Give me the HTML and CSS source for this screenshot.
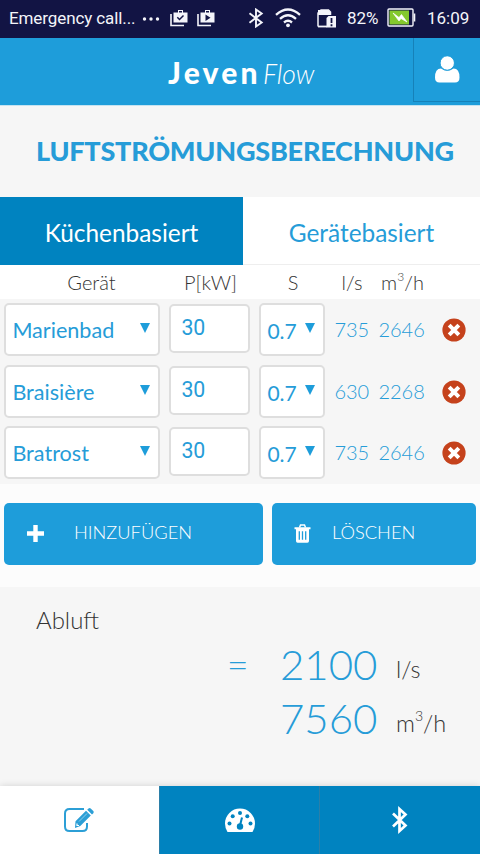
FILE: index.html
```
<!DOCTYPE html>
<html lang="de">
<head>
  <meta charset="UTF-8">
  <meta name="viewport" content="width=device-width, initial-scale=1.0">
  <title>Jeven Flow</title>
  <link rel="stylesheet" href="styles.css">
</head>
<body>
  <svg class="defs" width="0" height="0">
    <symbol id="remove" viewBox="0 0 24 24">
      <circle cx="12" cy="12" r="11.6" fill="#c5421c"/>
      <path d="M8.6 8.6l6.8 6.8M15.4 8.6l-6.8 6.8" stroke="#fff" stroke-width="4" stroke-linecap="square"/>
    </symbol>
  </svg>

  <div class="status">
    <span class="carrier">Emergency call...</span>
    <svg class="dots" width="18" height="6" viewBox="0 0 18 6" fill="#f4f4fa"><circle cx="2.5" cy="3" r="1.7"/><circle cx="9" cy="3" r="1.7"/><circle cx="15.5" cy="3" r="1.7"/></svg>
    <svg class="bag" width="18" height="18" viewBox="0 0 18 18"><path d="M1 5v11.5h13" fill="none" stroke="#f4f4fa" stroke-width="1.6"/><path d="M3.5 3.5H8V1h5v2.5h4.5v10h-14z" fill="#f4f4fa"/><path d="M9 2h3v1.500H9z" fill="#121444"/><path d="M7.300 8.300l2.200 2.200 4-4" fill="none" stroke="#121444" stroke-width="1.500"/></svg>
    <svg class="bag bag-play" width="18" height="18" viewBox="0 0 18 18"><path d="M1 5v11.5h13" fill="none" stroke="#f4f4fa" stroke-width="1.6"/><path d="M3.5 3.5H8V1h5v2.5h4.5v10h-14z" fill="#f4f4fa"/><path d="M9 2h3v1.500H9z" fill="#121444"/><path d="M8.500 5.500l5 3.200-5 3.200z" fill="#121444"/></svg>
    <svg class="bt" width="16" height="20" viewBox="0 0 16 20" fill="none" stroke="#f4f4fa" stroke-width="1.900"><path d="M1.500 5.300l12.200 9.200-5.700 4V1.500l5.700 4L1.500 14.700"/></svg>
    <svg class="wifi" width="26" height="20" viewBox="0 0 26 20" fill="none" stroke="#f4f4fa" stroke-width="2.300"><path d="M1 6.800q12-10.600 24 0M5 10.800q8-7 16 0M9 14.500q4-3.400 8 0"/><circle cx="13" cy="17.300" r="1.900" fill="#f4f4fa" stroke="none"/></svg>
    <svg class="sim" width="20" height="19" viewBox="0 0 20 19"><path d="M1 17.500V4l3-3h7.500l2 2v3" fill="none" stroke="#f4f4fa" stroke-width="1.500"/><path d="M1 1h10.500l2 2.500V6H1z" fill="#f4f4fa"/><path d="M1 17.500h9" stroke="#f4f4fa" stroke-width="1.800"/><path d="M9.500 9l2-2H19v11.500H9.500z" fill="#f4f4fa"/><path d="M14.500 9v5M14.500 15.300v2" stroke="#121444" stroke-width="1.800"/></svg>
    <span class="percent">82%</span>
    <svg class="battery" width="29" height="19" viewBox="0 0 29 19"><rect x="1" y="1" width="25" height="17" rx="1" fill="none" stroke="#f4f4fa" stroke-width="1.400"/><path d="M27.500 5.500v8" stroke="#f4f4fa" stroke-width="1.600"/><rect x="2.500" y="2.500" width="19.500" height="14" fill="#84c92d"/><path d="M6 5l6 4.500 2.500-3L20 14l-6-3.500-2 2.500z" fill="#fff" stroke="#fff" stroke-width=".7"/></svg>
    <span class="clock">16:09</span>
  </div>

  <header>
    <div class="logo"><b>Jeven</b><i>Flow</i></div>
    <div class="user">
      <svg width="25" height="27" viewBox="0 0 25 27" fill="#fff"><path d="M6 12.500Q0 12.500 0 21.500 0 26.500 4.500 26.500h15.500q4.500 0 4.500-5Q24.500 12.500 18.500 12.500q-6.250 4.500-12.500 0z"/><circle cx="12.250" cy="7" r="7.200" fill="#fff" stroke="#1e9dda" stroke-width="1"/></svg>
    </div>
  </header>

  <h1>LUFTSTRÖMUNGSBERECHNUNG</h1>

  <div class="tabs">
    <div class="tab active">Küchenbasiert</div>
    <div class="tab">Gerätebasiert</div>
  </div>

  <div class="grid head">
    <span>Gerät</span><span>P[kW]</span><span>S</span><span>l/s</span><span class="flow">m<sup>3</sup>/h</span>
  </div>

  <div class="rows">
    <div class="grid row">
      <div class="select">Marienbad<i class="arrow"></i></div>
      <div class="input">30</div>
      <div class="select small">0.7<i class="arrow"></i></div>
      <span>735</span><span class="flow">2646</span>
      <svg class="remove" width="24" height="24"><use href="#remove"/></svg>
    </div>
    <div class="grid row">
      <div class="select">Braisière<i class="arrow"></i></div>
      <div class="input">30</div>
      <div class="select small">0.7<i class="arrow"></i></div>
      <span>630</span><span class="flow">2268</span>
      <svg class="remove" width="24" height="24"><use href="#remove"/></svg>
    </div>
    <div class="grid row">
      <div class="select">Bratrost<i class="arrow"></i></div>
      <div class="input">30</div>
      <div class="select small">0.7<i class="arrow"></i></div>
      <span>735</span><span class="flow">2646</span>
      <svg class="remove" width="24" height="24"><use href="#remove"/></svg>
    </div>
  </div>

  <div class="buttons">
    <div class="btn add">
      <svg width="17" height="17" viewBox="0 0 17 17"><path d="M8.500 2v13M2 8.500h13" stroke="#fff" stroke-width="4.400" stroke-linecap="square"/></svg>
      <span>HINZUFÜGEN</span>
    </div>
    <div class="btn delete">
      <svg width="17" height="19" viewBox="0 0 17 19"><path d="M5.500 3.500l1-2.500h4l1 2.500" fill="none" stroke="#fff" stroke-width="1.500"/><path d="M.5 3.300h16v1.900H15V17q0 1.800-1.600 1.800H3.600Q2 18.800 2 17V5.200H.5z" fill="#fff"/><path d="M5.300 7.300v8.500M8.500 7.300v8.500M11.700 7.300v8.500" stroke="#1e9dda" stroke-width="1.300"/></svg>
      <span>LÖSCHEN</span>
    </div>
  </div>

  <div class="result">
    <div class="caption">Abluft</div>
    <div class="total"><span class="eq">=</span><span class="num">2100</span><span class="unit">l/s</span></div>
    <div class="total"><span></span><span class="num">7560</span><span class="unit">m<sup>3</sup>/h</span></div>
  </div>

  <nav>
    <div class="item active">
      <svg width="32" height="26" viewBox="0 0 32 26"><path d="M21 2H6.500Q2 2 2 6.500v13Q2 24 6.500 24h13q4.500 0 4.500-4.500V16" fill="none" stroke="#2c9fd6" stroke-width="2"/><path d="M12.500 14.300L23 3.800l4.800 4.800L17.300 19.100l-5.300 1.900zM24.200 2.700l1.300-1.300q1-1 2.200 0l2.600 2.600q1 1 0 2.200L29 7.500z" fill="#2c9fd6"/><path d="M16 14.500l8-8" stroke="#8fcdea" stroke-width="1"/><path d="M14 16.500v2h2" fill="none" stroke="#fff" stroke-width="1.200"/></svg>
    </div>
    <div class="item">
      <svg width="32" height="26" viewBox="0 0 32 26"><path d="M3.500 25Q1 21 1 16.500a15 15 0 0 1 30 0Q31 21 28.500 25z" fill="#fff"/><g fill="#0083c0"><circle cx="5.500" cy="16.500" r="2"/><circle cx="8.700" cy="9.300" r="2"/><circle cx="16" cy="6" r="2"/><circle cx="23.300" cy="9.300" r="2"/><circle cx="26.500" cy="16.500" r="2"/><circle cx="16" cy="19.500" r="3.200"/></g><path d="M16 18.500l2-8" stroke="#0083c0" stroke-width="2"/></svg>
    </div>
    <div class="item">
      <svg width="18" height="30" viewBox="0 0 18 30" fill="none" stroke="#fff" stroke-width="2.700"><path d="M2 8.500l12.500 12L8.500 26V4l6 5.500L2 21.500"/></svg>
    </div>
  </nav>
</body>
</html>
```
FILE: styles.css
```
* { box-sizing: border-box; }
body { margin: 0; width: 480px; height: 854px; overflow: hidden; background: #f6f6f6; color: #333; font-family: Lato, sans-serif; }
svg { display: block; flex: none; }
.defs { position: absolute; }
sup { font-size: 0.6em; line-height: 0; vertical-align: 0.75em; }

.status { display: flex; align-items: center; height: 38px; padding: 0 9px; background: #121444; color: #f4f4fa; font: 17px Roboto, sans-serif; white-space: nowrap; }
.carrier { width: 126px; padding-bottom: 2px; letter-spacing: -0.1px; }
.dots { margin-left: 7px; }
.bag { margin: 0 0 3px 10px; }
.bag-play { margin-left: 9px; }
.bt { margin: 0 0 3px 33px; }
.wifi { margin: 0 0 2px 11px; }
.sim { margin: 0 0 2px 16px; }
.percent { width: 40px; margin-left: 10px; padding-bottom: 2px; }
.battery { margin-bottom: 3px; }
.clock { margin-left: 11px; padding-bottom: 2px; }

header { display: flex; height: 68px; background: #1e9dda; border-bottom: 1px solid #c5e3f1; color: #fff; }
.logo { display: flex; align-items: baseline; width: 413px; padding: 17px 0 0 168px; }
.logo b { width: 95px; font-size: 30px; line-height: 34px; font-weight: 900; letter-spacing: 3.2px; }
.logo i { font-size: 26.500px; font-weight: 300; }
.user { width: 67px; height: 64px; padding: 18px 0 0 21px; border-left: 1px solid #1681b8; border-bottom: 1px solid #1681b8; }

h1 { height: 91px; margin: 0; padding: 28px 0 0 36px; font-size: 27px; line-height: 34px; font-weight: 900; color: #269cd8; letter-spacing: -0.22px; white-space: nowrap; }

.tabs { display: flex; height: 68px; border-bottom: 1px solid #eee; background: #fff; }
.tab { width: 237px; line-height: 71px; text-align: center; font-size: 24.4px; color: #269cd8; }
.tab.active { width: 243px; height: 68px; background: #0083c0; color: #fff; }

.grid { display: grid; grid-template-columns: 156px 81px 66px 34px 46px 24px; }
.head { height: 34px; padding-left: 5px; column-gap: 9px; background: #fff; font-size: 20px; font-weight: 300; line-height: 35px; white-space: nowrap; }
.head span { text-align: center; }
.head span:first-child { padding-left: 17px; }
.flow { margin: 0 -2px 0 1px; }
.rows { height: 185px; padding-top: 4px; background: #f6f6f6; }
.row { height: 61.500px; padding-left: 4.400px; column-gap: 9px; color: #269cd8; font-size: 20px; font-weight: 300; line-height: 52px; }
.select, .input { position: relative; height: 53px; border: 2px solid #dedede; border-radius: 5px; background: #fff; font-size: 21.600px; font-weight: 400; padding-left: 6px; line-height: 51px; }
.select.small { font-size: 21px; }
.input { height: 49px; margin-top: 1px; padding-left: 10px; font-family: Roboto, sans-serif; font-size: 21.300px; line-height: 43px; }
.arrow { position: absolute; right: 8px; top: 18px; border: 5px solid transparent; border-top: 10px solid #1e9dda; border-bottom: 0; }
.remove { margin: 15px 0 0 10px; }

.buttons { display: flex; gap: 9px; height: 103px; padding: 19px 4px; background: #fcfcfc; }
.btn { display: flex; height: 62px; border-radius: 5px; background: #1e9dda; color: #fff; font-size: 18.300px; font-weight: 300; line-height: 59px; }
.btn svg { margin: 22px 0 0 23px; }
.add { width: 259px; }
.add span { margin-left: 30px; }
.delete { width: 204px; }
.delete svg { margin-top: 21px; margin-left: 22px; }
.delete span { margin-left: 21px; }

.result { height: 199px; padding-top: 18px; font-weight: 300; }
.caption { padding-left: 36px; font-size: 24px; line-height: 30px; }
.total { display: grid; grid-template-columns: 53px 115px auto; height: 54px; padding-left: 227px; align-items: baseline; color: #269cd8; }
.caption + .total { margin-top: 3px; }
.eq { font-size: 36px; transform: translate(1px, -2px) scaleX(1.05); }
.num { font-size: 42px; line-height: 52px; }
.unit { padding-left: 1px; color: #333; font-size: 23.500px; transform: translateY(-2px); }

nav { display: flex; height: 68px; background: #0083c0; box-shadow: 0 0 7px rgba(0, 0, 0, .15); }
.item { display: flex; align-items: center; justify-content: center; width: 161px; border-left: 1px solid #2b7fa8; }
.item.active { width: 159px; background: #fff; border: 0; }
```
